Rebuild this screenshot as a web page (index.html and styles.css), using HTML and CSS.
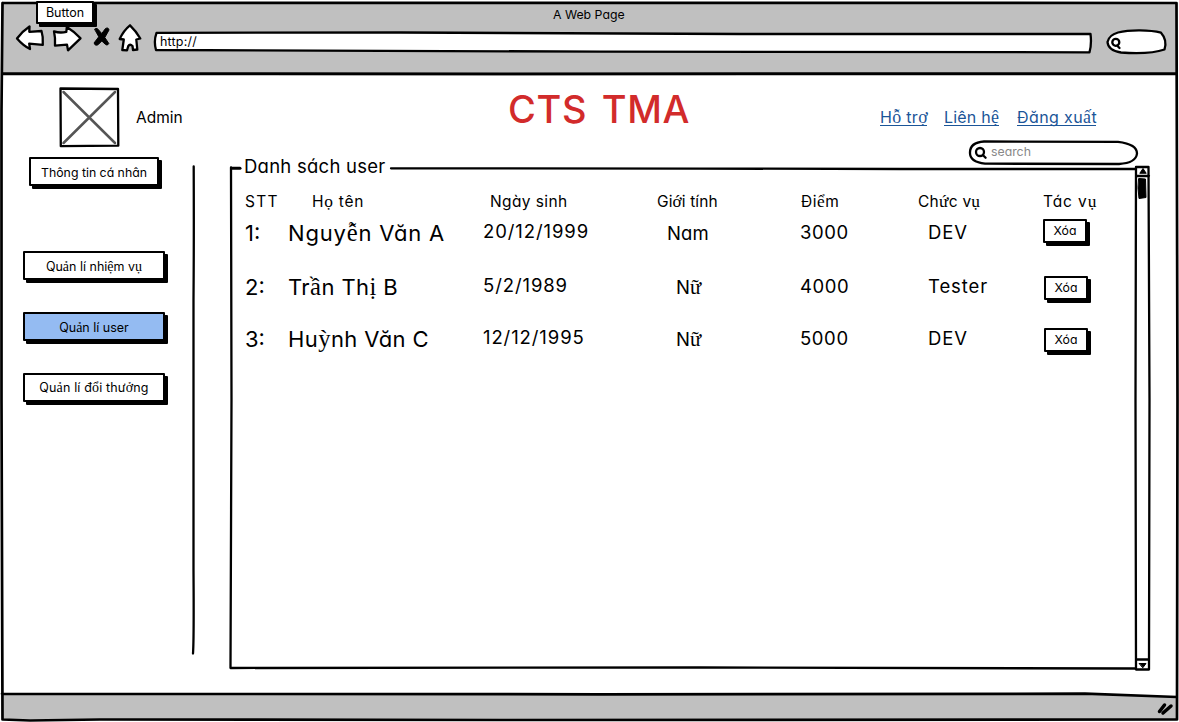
FILE: index.html
```html
<!DOCTYPE html>
<html lang="vi">
<head>
<meta charset="utf-8">
<title>A Web Page</title>
<link rel="stylesheet" href="styles.css">
</head>
<body>
<div class="window">
  <header class="chrome">
    <div class="chrome-title">A Web Page</div>
    <nav class="toolbar">
      <svg class="tool" width="30" height="30" viewBox="15 24 30 30"><path d="M17 38.5Q22 31.500 29.500 26.500L29.300 31.800 41.500 31Q43.400 37 42.800 44.800L29.200 43.700 30 49Q23 45.500 17 38.500Z"/></svg>
      <svg class="tool tool-forward" width="30" height="30" viewBox="52 24 30 30"><path d="M54 31.3Q60 33.4 66.3 31.8L66.8 27Q75 32 80.5 38.3L68 50.3 67 44.6 55 45.6Q55.5 38 54 31.3Z"/></svg>
      <svg class="tool tool-stop" width="20" height="24" viewBox="92 25 20 24"><path d="M94.800 29Q97 27 99.500 31L101.800 33.500 105.500 28.500Q108.500 27 109 30L104.800 37.500 108.800 43.500Q107.500 46.500 105 44L101.800 41 98 44.800Q95 46.500 94 43L98.600 37Z"/></svg>
      <svg class="tool tool-home" width="26" height="30" viewBox="117 24 26 30"><path d="M130 25.300Q136 31 140.300 38.500L136.300 39.500 137.300 49.500 133 50 132.500 46Q130 43.500 128.300 46L127 50.300 122.300 50 123.800 39.500 119.700 39Q123.500 30.500 130 25.300Z"/></svg>
      <div class="url">
        <svg class="shape" width="940" height="24" viewBox="153 30 940 24"><path d="M156.500 32.800 400 32.500 740 34 1090.500 34Q1091.800 44 1089.500 52.300L600 51.600 156 50Q153.500 41 156.500 32.800Z"/></svg>
        <span class="url-text">http://</span>
      </div>
      <svg class="tool find" width="62" height="28" viewBox="1106 28 62 28"><path d="M1118 32.500C1130 29.500 1150 29.800 1161 32.700Q1167.500 40 1164.500 49.500Q1150 54.500 1121 52.500Q1108 50.500 1107.500 42Q1109 35 1118 32.500Z"/><circle cx="1115.800" cy="42.300" r="3.500"/><path d="m1117.500 46 2 2"/></svg>
    </nav>
    <div class="btn tooltip">Button</div>
  </header>

  <main class="page">
    <aside class="sidebar">
      <div class="profile">
        <svg class="avatar" width="61" height="61" viewBox="0 0 61 61"><path class="avatar-frame" d="M1.500 1.500 59 2 59.300 58.700 1.800 59.200Z"/><path class="avatar-cross" d="M4.500 5 56 56M56 5 4.500 56"/></svg>
        <span class="profile-name">Admin</span>
      </div>
      <div class="btn btn-profile">Thông tin cá nhân</div>
      <div class="menu">
        <div class="btn menu-item">Qu<i>ả</i>n lí nhi<i>ệ</i>m v<i>ụ</i></div>
        <div class="btn menu-item selected">Qu<i>ả</i>n lí user</div>
        <div class="btn menu-item item-rewards">Qu<i>ả</i>n lí đ<i>ổ</i>i thư<i>ở</i>ng</div>
      </div>
    </aside>
    <svg class="divider" width="6" height="490" viewBox="190 165 6 490"><path d="M193.700 166.500Q194 240 193.500 300T193.500 570Q194 640 193 653.500"/></svg>

    <section class="content">
      <div class="banner">
        <h1 class="brand">CTS TMA</h1>
        <div class="links">
          <a class="link-help">H<i>ỗ</i> tr<i>ợ</i></a>
          <a class="link-contact">Liên h<i>ệ</i></a>
          <a class="link-logout">Đăng xu<i>ấ</i>t</a>
        </div>
      </div>
      <div class="search">
        <svg class="shape" width="171" height="26" viewBox="968 140 171 26"><path d="M984 141.500 1118 141.800Q1137 144 1137 153.500Q1136 163 1119 164L985 163.700Q969.500 162 970 152.500Q970 142.500 984 141.500Z"/><circle cx="980" cy="152" r="4"/><path d="m982.800 155 2.800 2.800"/></svg>
        <span class="search-text">search</span>
      </div>
      <div class="panel">
        <svg class="shape" width="924" height="508" viewBox="229 164 924 508">
          <path class="bold" d="M240 168.300H231.500"/>
          <path d="M391 168.300 700 168.600 900 169 1135 169M231 167.500 231.500 400 230.500 668 700 667.500 1135 668.500"/>
          <path d="M1136 167 1148.500 166.800 1149.500 400 1149 669.500 1136 669.500 1135.500 400ZM1136 176H1149M1136 659.500H1149"/>
          <path class="solid" d="m1140 173 3-4.500 3 4.500ZM1139.500 663.500H1146L1143 667.500ZM1139 178.500 1145.500 179 1146 197.500 1139 198.500 1138 188Z"/>
        </svg>
        <div class="legend">Danh sách user</div>
        <div class="table">
          <div class="row head">
            <span class="h-no">STT</span><span class="h-name">H<i>ọ</i> tên</span><span class="h-date">Ngày sinh</span><span class="h-sex">Gi<i>ớ</i>i tính</span><span class="h-points">Đi<i>ể</i>m</span><span class="h-role">Ch<i>ứ</i>c v<i>ụ</i></span><span class="h-act">Tác v<i>ụ</i></span>
          </div>
          <div class="row first">
            <span class="no">1:</span><span class="name">Nguy<i>ễ</i>n Văn A</span><span class="date">20/12/1999</span><span class="sex sex-m">Nam</span><span class="points">3000</span><span class="role">DEV</span><span class="btn del">Xóa</span>
          </div>
          <div class="row second">
            <span class="no">2:</span><span class="name">Tr<i>ầ</i>n Th<i>ị</i> B</span><span class="date">5/2/1989</span><span class="sex">N<i>ữ</i></span><span class="points">4000</span><span class="role">Tester</span><span class="btn del">Xóa</span>
          </div>
          <div class="row third">
            <span class="no">3:</span><span class="name">Hu<i>ỳ</i>nh Văn C</span><span class="date">12/12/1995</span><span class="sex">N<i>ữ</i></span><span class="points">5000</span><span class="role">DEV</span><span class="btn del">Xóa</span>
          </div>
        </div>
      </div>
    </section>
  </main>

  <svg class="frame" width="1179" height="722" viewBox="0 0 1179 722">
    <path class="gray" d="M2 693.500 600 694 1085 693.500 1177 697V719.500H2Z"/>
    <path d="M3 3 600 2.800 1176.500 3 1177.500 400 1177 719.500 500 720 100 719.500 30 720.500 2.500 719.500 1.500 400 1.500 110 2.500 3M3 73.300 500 73.800 1176 73.500M2 693.800 600 694.300 1085 693.700 1177 697"/>
    <path class="grip" d="m1159.500 711.500 5-6.500M1163 713 1171 706"/>
  </svg>
</div>
</body>
</html>
```

FILE: styles.css
```css
* { box-sizing: border-box; }

body {
  margin: 0;
  background: #fff;
  color: #000;
  font-family: Inter, "Liberation Sans", sans-serif;
  font-feature-settings: "cv11";
  font-size: 16px;
  line-height: 24px;
  white-space: nowrap;
}

/* accented letters set in serif */
i {
  font-family: "Liberation Serif", serif;
  font-size: 1.12em;
  font-style: normal;
  line-height: 0;
}

svg {
  display: block;
  flex: none;
  overflow: visible;
  fill: none;
  stroke: #000;
  stroke-width: 2.3;
  stroke-linejoin: round;
  stroke-linecap: round;
}

.window {
  position: relative;
  display: flex;
  flex-direction: column;
  width: 1179px;
  height: 722px;
  overflow: hidden;
}

.frame { position: absolute; inset: 0; stroke-width: 2.7; pointer-events: none; }
.gray { fill: #c0c0c0; stroke: none; }
.grip { stroke-width: 3.5; }

/* browser bar */
.chrome {
  position: relative;
  flex: none;
  height: 74px;
  margin: 2px 2px -2px;
  background: #c0c0c0;
}
.chrome-title {
  height: 22px;
  padding-left: 551px;
  font-size: 12.3px;
  line-height: 25px;
}
.toolbar { display: flex; padding-left: 13px; }
.tool { fill: #fff; }
.tool-forward { margin-left: 7px; }
.tool-stop { margin: 1px 0 0 10px; fill: #000; stroke-width: 1; }
.tool-home { margin-left: 5px; }
.url {
  display: grid;
  width: 940px;
  height: 24px;
  margin: 6px 0 0 10px;
}
.url > *, .search > *, .panel > * { grid-area: 1 / 1; }
.url .shape, .search .shape { fill: #fff; }
.url-text {
  padding-left: 7px;
  font-size: 12.5px;
  letter-spacing: 0.2px;
  line-height: 23px;
}
.find { margin: 4px 0 0 13px; }

.btn {
  background: #fff;
  border: 2px solid #000;
  border-radius: 1px;
  box-shadow: 3px 3px 0 #000;
  text-align: center;
  font-size: 12.5px;
}
.tooltip {
  position: absolute;
  z-index: 2;
  left: 34px;
  top: -1px;
  width: 58px;
  height: 23px;
  line-height: 20px;
}

/* page */
.page { display: flex; flex: 1; padding-top: 12px; }
.sidebar { width: 190px; flex: none; padding-left: 23px; }
.profile { display: flex; padding: 1px 0 0 36px; }
.avatar-cross { stroke: #555; stroke-width: 2.5; }
.profile-name { padding: 19px 0 0 16px; font-size: 15.5px; }
.btn-profile {
  width: 130px;
  height: 29px;
  margin: 9px 0 0 6px;
  font-size: 12.3px;
  line-height: 27px;
}
.menu { display: grid; gap: 32px; margin-top: 65px; }
.menu-item { width: 142px; height: 29px; line-height: 27px; }
.item-rewards { letter-spacing: 0.15px; line-height: 25px; }
.selected { background: #94bbf2; }
.divider { margin-top: 79px; }

.content { flex: none; width: 924px; margin-left: 33px; }
.banner { display: flex; height: 54px; }
.brand {
  width: 371px;
  margin: 0 0 0 279px;
  color: #d22b2b;
  font-size: 38px;
  font-weight: 450;
  letter-spacing: 0.6px;
  word-spacing: 4px;
  line-height: 46px;
}
.links { display: flex; padding: 19px 0 0 1px; color: #1b5598; }
.links a { height: 21px; border-bottom: 1.5px solid #1b5598; }
.link-help { width: 47px; letter-spacing: 0.3px; }
.link-contact { width: 55px; margin: 0 18px 0 17px; letter-spacing: 0.2px; }
.link-logout { width: 79px; letter-spacing: 0.4px; }
.search { display: grid; width: 171px; height: 24px; margin-left: 739px; }
.search-text { padding-left: 23px; color: #888; font-size: 12.3px; line-height: 23px; }

.panel { display: grid; height: 508px; }
.bold { stroke-width: 3; }
.solid { fill: #000; stroke-width: 1; }
.legend {
  padding-left: 15px;
  font-size: 18.5px;
  letter-spacing: 0.25px;
  line-height: 5px;
}

.table { padding: 25px 0 0 16px; }
.row {
  display: grid;
  grid-template-columns: 43px 195px 174px 143px 118px 125px 100px;
  align-items: start;
  font-size: 18.5px;
}
.head { height: 32px; font-size: 15.5px; line-height: 26px; }
.first { height: 54px; }
.second { height: 52px; }
.h-no { letter-spacing: 1.3px; }
.h-name { padding-left: 24px; letter-spacing: 0.75px; }
.h-date { padding-left: 7px; letter-spacing: 0.4px; }
.h-sex { letter-spacing: 0.1px; }
.h-points { padding-left: 1px; letter-spacing: 0.5px; }
.h-role { letter-spacing: 0.25px; }
.h-act { letter-spacing: 0.9px; }
.no, .name { font-size: 22px; }
.name { letter-spacing: 0.4px; }
.first .name { letter-spacing: 0.8px; }
.date { margin-top: -2px; letter-spacing: 0.9px; }
.sex { padding-left: 19px; }
.sex-m { padding-left: 10px; letter-spacing: 0.1px; }
.points { margin-top: -1px; letter-spacing: 0.6px; }
.role { margin-top: -1px; padding-left: 10px; letter-spacing: 0.9px; }
.del { width: 44px; height: 24px; margin: 1px 0 0 1px; font-size: 12.3px; line-height: 20px; }
.first .del { margin: -2px 0 0; }
```
